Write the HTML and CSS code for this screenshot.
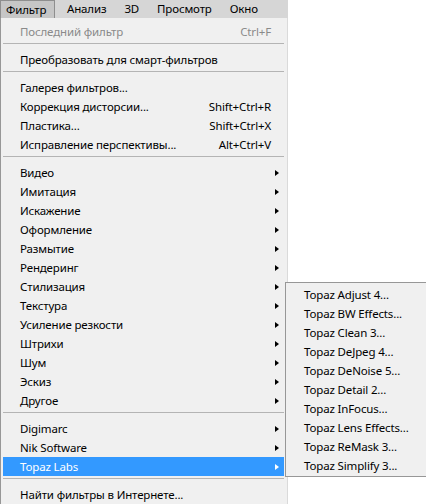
FILE: index.html
```html
<!DOCTYPE html>
<html lang="ru">
<head>
<meta charset="utf-8">
<title>Фильтр</title>
<link rel="stylesheet" href="styles.css">
</head>
<body>
<div class="screen">
  <nav class="menubar">
    <span class="bar-item open">Фильтр</span>
    <span class="bar-item">Анализ</span>
    <span class="bar-item">3D</span>
    <span class="bar-item">Просмотр</span>
    <span class="bar-item">Окно</span>
  </nav>

  <div class="menu">
    <div class="row disabled"><span>Последний фильтр</span><span class="key">Ctrl+F</span></div>
    <div class="sep"></div>
    <div class="row"><span>Преобразовать для смарт-фильтров</span></div>
    <div class="sep"></div>
    <div class="row"><span>Галерея фильтров...</span></div>
    <div class="row"><span>Коррекция дисторсии...</span><span class="key">Shift+Ctrl+R</span></div>
    <div class="row"><span>Пластика...</span><span class="key">Shift+Ctrl+X</span></div>
    <div class="row"><span>Исправление перспективы...</span><span class="key">Alt+Ctrl+V</span></div>
    <div class="sep"></div>
    <div class="row sub"><span>Видео</span><i class="arrow"></i></div>
    <div class="row sub"><span>Имитация</span><i class="arrow"></i></div>
    <div class="row sub"><span>Искажение</span><i class="arrow"></i></div>
    <div class="row sub"><span>Оформление</span><i class="arrow"></i></div>
    <div class="row sub"><span>Размытие</span><i class="arrow"></i></div>
    <div class="row sub"><span>Рендеринг</span><i class="arrow"></i></div>
    <div class="row sub"><span>Стилизация</span><i class="arrow"></i></div>
    <div class="row sub"><span>Текстура</span><i class="arrow"></i></div>
    <div class="row sub"><span>Усиление резкости</span><i class="arrow"></i></div>
    <div class="row sub"><span>Штрихи</span><i class="arrow"></i></div>
    <div class="row sub"><span>Шум</span><i class="arrow"></i></div>
    <div class="row sub"><span>Эскиз</span><i class="arrow"></i></div>
    <div class="row sub"><span>Другое</span><i class="arrow"></i></div>
    <div class="sep"></div>
    <div class="row sub"><span>Digimarc</span><i class="arrow"></i></div>
    <div class="row sub"><span>Nik Software</span><i class="arrow"></i></div>
    <div class="row sub active"><span>Topaz Labs</span><i class="arrow"></i></div>
    <div class="sep"></div>
    <div class="row"><span>Найти фильтры в Интернете...</span></div>

    <!-- flyout for the highlighted "Topaz Labs" entry -->
    <div class="submenu">
      <div class="row">Topaz Adjust 4...</div>
      <div class="row">Topaz BW Effects...</div>
      <div class="row">Topaz Clean 3...</div>
      <div class="row">Topaz DeJpeg 4...</div>
      <div class="row">Topaz DeNoise 5...</div>
      <div class="row">Topaz Detail 2...</div>
      <div class="row">Topaz InFocus...</div>
      <div class="row">Topaz Lens Effects...</div>
      <div class="row">Topaz ReMask 3...</div>
      <div class="row">Topaz Simplify 3...</div>
    </div>
  </div>
</div>
</body>
</html>
```

FILE: styles.css
```css
html, body {
  margin: 0;
  padding: 0;
  background: #ffffff;
}

.screen {
  width: 426px;
  height: 504px;
  overflow: hidden;
  font-family: "Noto Sans", "Open Sans", sans-serif;
  font-size: 11.5px;
  letter-spacing: -0.15px;
  color: #000;
}

/* application menu bar */
.menubar {
  width: 288px;
  height: 18px;
  background: #d6d6d6;
  display: flex;
  align-items: stretch;
  box-sizing: border-box;
}

.bar-item {
  display: flex;
  align-items: center;
  padding: 0 9px;
  line-height: 18px;
}

.bar-item.open {
  background: #c6c6c6;
  border: 1px solid #8e8e8e;
  border-bottom: none;
  width: 55px;
  box-sizing: border-box;
  padding: 0 0 0 5px;
  margin-right: 3px;
}

/* drop-down list */
.menu {
  position: relative;
  width: 288px;
  box-sizing: border-box;
  background: #f0f0f0;
  border-left: 1px solid #979797;
  border-right: 1px solid #dadada;
  padding: 4px 3px 0 2px;
  height: 486px;
}

.row {
  height: 19px;
  display: flex;
  align-items: center;
  justify-content: space-between;
  padding: 0 5px 0 17px;
  white-space: nowrap;
}

.row.disabled {
  color: #8a8a8a;
}

.key {
  margin-right: 8px;
}

.arrow {
  width: 0;
  height: 0;
  border-left: 4px solid #000;
  border-top: 3.5px solid transparent;
  border-bottom: 3.5px solid transparent;
}

.row.active {
  background: #3399ff;
  color: #fff;
}

.row.active .arrow {
  border-left-color: #fff;
}

.sep {
  height: 9px;
  box-sizing: border-box;
  padding-top: 2px;
}

.sep::before {
  content: "";
  display: block;
  height: 1px;
  background: #b4b4b4;
}

/* cascading flyout */
.submenu {
  position: absolute;
  left: 284px;
  top: 264px;
  width: 160px;
  box-sizing: border-box;
  background: #f0f0f0;
  border: 1px solid #979797;
  padding: 2px 0 1px 0;
}

.submenu .row {
  padding-left: 18px;
  justify-content: flex-start;
}
```
